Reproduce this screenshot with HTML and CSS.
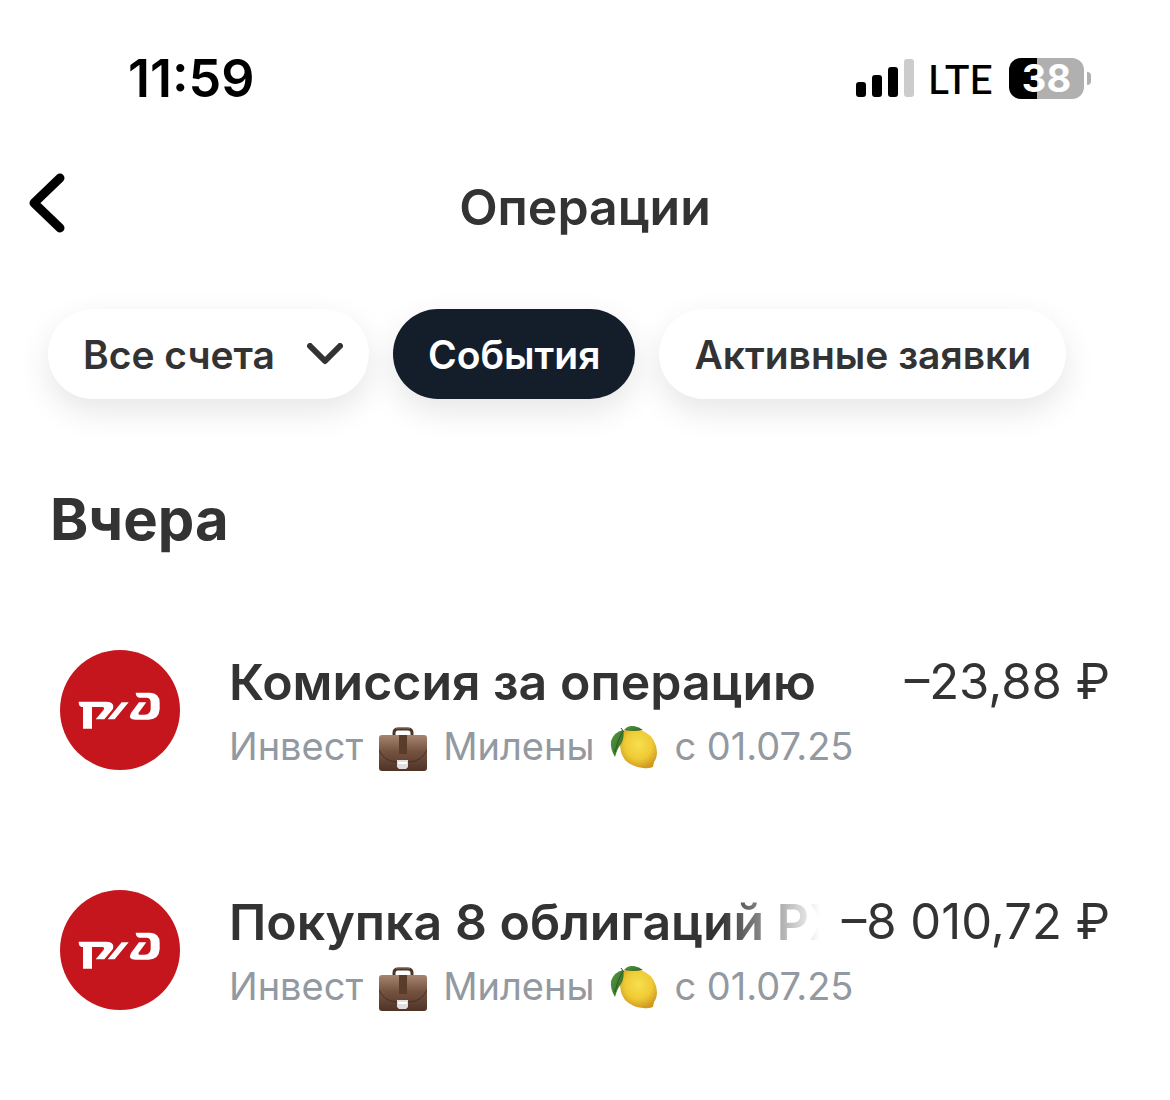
FILE: index.html
```html
<!DOCTYPE html>
<html lang="ru">

<head>
    <meta charset="UTF-8">
    <meta name="viewport" content="width=device-width, initial-scale=1.0">
    <title>Операции</title>
    <link rel="stylesheet" href="styles.css">
</head>

<body>
    <!-- shared icons -->
    <svg class="sprite" aria-hidden="true">
        <defs>
            <linearGradient id="leather" x1="0" y1="0" x2="0" y2="1">
                <stop offset="0" stop-color="#a58570" />
                <stop offset=".45" stop-color="#765340" />
                <stop offset="1" stop-color="#4f3326" />
            </linearGradient>
            <radialGradient id="peel" cx=".5" cy=".4" r=".6">
                <stop offset="0" stop-color="#f8df50" />
                <stop offset=".6" stop-color="#efcb34" />
                <stop offset="1" stop-color="#d09a24" />
            </radialGradient>
            <linearGradient id="leaf" x1="0" y1="0" x2="1" y2="1">
                <stop offset="0" stop-color="#5b9a42" />
                <stop offset="1" stop-color="#2c6526" />
            </linearGradient>
            <symbol id="rzd" viewBox="30 30 360 360">
                <circle cx="210" cy="210" r="180" fill="#c4161c" />
                <g fill="#fff">
                    <path d="M86 185H168Q190 185 190 200Q190 207 184 213L163 238H137L160 211Q167 201 155 201H126V266H99V201H95Q86 199 86 185Z" />
                    <path d="M173 238L215 187H236L194 238Z" />
                    <path d="M257 158H300Q329 159 329 188V208Q327 238 297 239H257Q232 239 243 219L267 187H289L266 218Q263 224 271 224H284Q302 223 302 207V187Q302 173 289 173H268Q258 172 257 158Z" />
                </g>
            </symbol>
            <symbol id="briefcase" viewBox="0 0 48 46">
                <path d="M15 10V7Q15 3 19 3H29Q33 3 33 7V10" fill="none" stroke="#4e3527" stroke-width="3" />
                <path d="M17 3Q18 2 20 2H28Q30 2 31 3" fill="none" stroke="#91705b" stroke-width="1" />
                <rect x="0" y="9" width="48" height="36" rx="3" fill="url(#leather)" />
                <path d="M0 24Q5 35 17 36H31Q43 35 48 24" fill="none" stroke="#463026" stroke-width="1" />
                <path d="M20 9H28V28H20Z" fill="#5b3b2a" />
                <path d="M18 34H29V41L27 43H20L18 41Z" fill="#dedfe0" />
                <path d="M19 37H28" stroke="#fff" stroke-width="2" />
            </symbol>
            <symbol id="lemon" viewBox="0 0 48 46">
                <path d="M13 5Q24 0 35 6Q46 12 47 26Q47 32 44 36L43 41Q38 43 33 42Q22 41 15 34Q10 27 10 18Q9 10 13 5Z" fill="url(#peel)" />
                <path d="M13 4Q4 6 1 15Q0 23 5 31Q7 23 11 18Q15 11 13 4Z" fill="url(#leaf)" />
                <path d="M14 4Q18 -1 24 0Q29 1 33 4Q23 6 14 4Z" fill="url(#leaf)" />
                <path d="M11 2L14 6M13 5Q8 13 5 26" fill="none" stroke="#335426" stroke-width="1" />
            </symbol>
        </defs>
    </svg>

    <div class="status-bar">
        <time class="status-time">11:59</time>
        <div class="status-icons">
            <svg class="signal" viewBox="0 0 58 38">
                <rect x="0" y="23" width="10" height="15" rx="3" />
                <rect x="16" y="16" width="10" height="22" rx="3" />
                <rect x="32" y="8" width="10" height="30" rx="3" />
                <rect x="48" y="0" width="10" height="38" rx="3" fill="#ccc" />
            </svg>
            <span class="network">LTE</span>
            <div class="battery">
                <span class="battery-level">38</span>
                <span class="battery-cap"></span>
            </div>
        </div>
    </div>

    <header class="header">
        <button class="back" type="button" aria-label="Назад">
            <svg viewBox="0 0 36 60">
                <path d="M31 5L5 30L31 55" />
            </svg>
        </button>
        <h1 class="title">Операции</h1>
    </header>

    <nav class="filters">
        <div class="chip chip-select">
            <select class="account" aria-label="Счёт">
                <option>Все счета</option>
            </select>
            <svg class="chevron" viewBox="0 0 36 22">
                <path d="M3 3L18 18L33 3" />
            </svg>
        </div>
        <button class="chip chip-active" type="button">События</button>
        <button class="chip" type="button">Активные заявки</button>
    </nav>

    <main class="history">
        <h2 class="day">Вчера</h2>
        <ul class="operations">
            <li class="operation">
                <svg class="logo"><use href="#rzd" /></svg>
                <div class="info">
                    <div class="row">
                        <span class="name">Комиссия за операцию</span>
                        <span class="amount">–23,88 ₽</span>
                    </div>
                    <div class="account-name">
                        <span>Инвест</span>
                        <svg class="emoji"><use href="#briefcase" /></svg>
                        <span>Милены</span>
                        <svg class="emoji"><use href="#lemon" /></svg>
                        <span>с 01.07.25</span>
                    </div>
                </div>
            </li>
            <li class="operation">
                <svg class="logo"><use href="#rzd" /></svg>
                <div class="info">
                    <div class="row">
                        <span class="name name-fade">Покупка 8 облигаций РЖ</span>
                        <span class="amount">–8 010,72 ₽</span>
                    </div>
                    <div class="account-name">
                        <span>Инвест</span>
                        <svg class="emoji"><use href="#briefcase" /></svg>
                        <span>Милены</span>
                        <svg class="emoji"><use href="#lemon" /></svg>
                        <span>с 01.07.25</span>
                    </div>
                </div>
            </li>
        </ul>
    </main>
</body>

</html>
```

FILE: styles.css
```css
* {
    margin: 0;
    padding: 0;
    box-sizing: border-box;
}

body {
    background: #fff;
    color: #333;
    font-family: Inter, "Liberation Sans", sans-serif;
}

button,
select {
    border: none;
    background: none;
    color: inherit;
    font: inherit;
}

.sprite {
    position: absolute;
    width: 0;
    height: 0;
}

/* status bar */
.status-bar {
    display: flex;
    justify-content: space-between;
    align-items: center;
    height: 156px;
    padding: 0 79px 0 128px;
    color: #000;
}

.status-time {
    font-size: 52px;
    font-weight: 600;
}

.status-icons {
    display: flex;
    align-items: center;
}

.signal {
    width: 58px;
    height: 38px;
    margin-right: 14px;
}

.network {
    margin-right: 16px;
    font-family: Lato, Inter, sans-serif;
    font-size: 41px;
    font-weight: 500;
}

.battery {
    display: flex;
    align-items: center;
    gap: 3px;
}

.battery-level {
    width: 75px;
    height: 41px;
    border-radius: 12px;
    background: linear-gradient(to right, #000 38%, #b0b0b0 38%);
    color: #fff;
    font-size: 38px;
    font-weight: 700;
    line-height: 41px;
    text-align: center;
}

.battery-cap {
    width: 4px;
    height: 13px;
    border-radius: 0 4px 4px 0;
    background: #b0b0b0;
}

/* header */
.header {
    display: grid;
    grid-template-columns: 72px 1fr 72px;
    align-items: center;
    height: 102px;
    padding: 0 29px;
}

.back {
    display: flex;
    padding-bottom: 8px;
}

.back svg {
    width: 36px;
    height: 60px;
    fill: none;
    stroke: #000;
    stroke-width: 9;
    stroke-linecap: round;
    stroke-linejoin: round;
}

.title {
    font-size: 50px;
    font-weight: 600;
    text-align: center;
}

/* filters */
.filters {
    display: flex;
    gap: 24px;
    padding: 51px 48px 0;
}

.chip {
    height: 90px;
    padding: 0 35px;
    border-radius: 45px;
    background: #fff;
    box-shadow: 0 12px 32px rgba(0, 0, 0, .1);
    font-size: 39px;
    font-weight: 600;
    white-space: nowrap;
}

.chip-active {
    background: #141e2b;
    color: #fff;
}

.chip-select {
    display: flex;
    align-items: center;
    gap: 32px;
    padding-right: 26px;
}

.account {
    appearance: none;
}

.chevron {
    width: 36px;
    height: 22px;
    fill: none;
    stroke: #333;
    stroke-width: 6;
    stroke-linecap: round;
    stroke-linejoin: round;
}

/* operations */
.history {
    padding: 84px 60px 0;
}

.day {
    margin-left: -10px;
    font-size: 58px;
    font-weight: 700;
    line-height: 72px;
}

.operations {
    margin-top: 35px;
    list-style: none;
}

.operation {
    display: flex;
    align-items: center;
    gap: 49px;
    height: 240px;
}

.logo {
    flex: none;
    width: 120px;
    height: 120px;
}

.info {
    flex: 1;
    min-width: 0;
    padding-top: 8px;
}

.row {
    display: flex;
    justify-content: space-between;
    gap: 22px;
    line-height: 64px;
    white-space: nowrap;
}

.name {
    overflow: hidden;
    font-size: 50px;
    font-weight: 600;
}

.name-fade {
    -webkit-mask-image: linear-gradient(to left, transparent, #000 100px);
    mask-image: linear-gradient(to left, transparent, #000 100px);
}

.amount {
    flex: none;
    font-size: 49px;
}

.account-name {
    display: flex;
    align-items: center;
    gap: 16px;
    color: #9299a0;
    font-size: 38px;
    line-height: 64px;
    white-space: nowrap;
}

.emoji {
    width: 48px;
    height: 46px;
    margin-top: 6px;
}
```
